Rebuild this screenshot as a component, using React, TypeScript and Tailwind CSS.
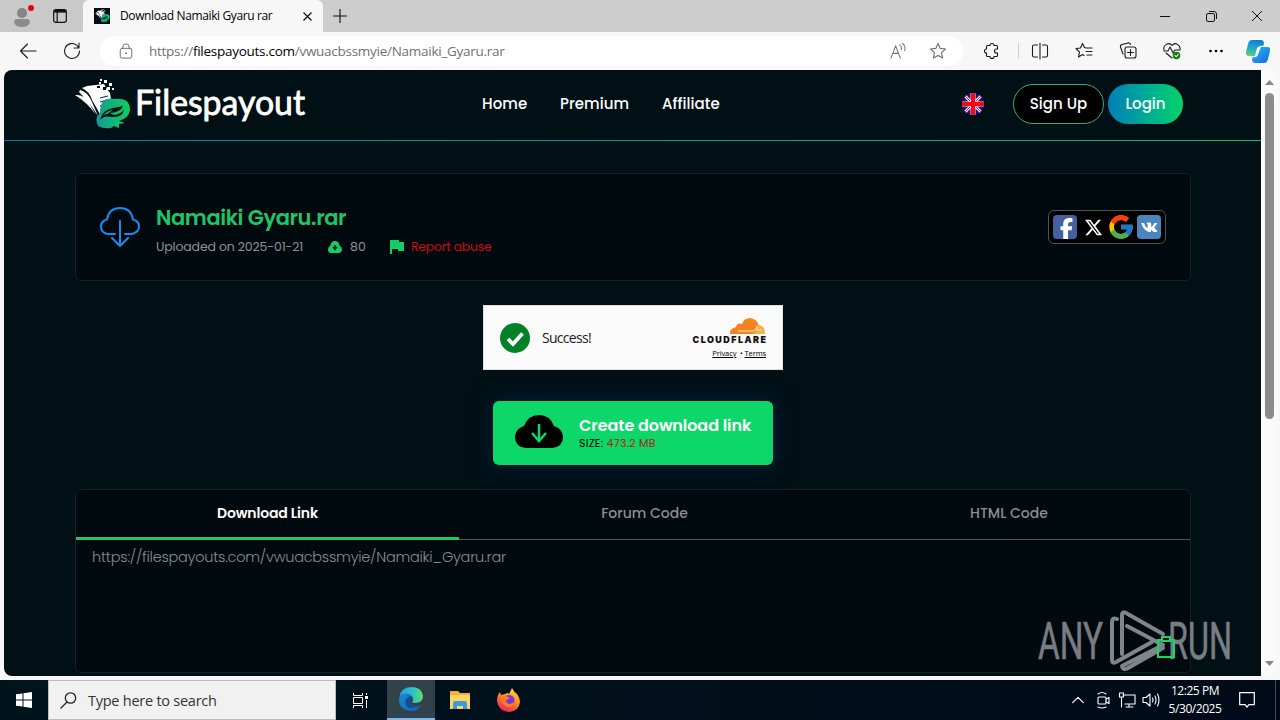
import type { ReactNode } from "react";
import { FaXTwitter, FaFacebookF } from "react-icons/fa6";
import { FcGoogle } from "react-icons/fc";

const PAGE_FONT = "font-[Poppins,Inter,sans-serif]";
const UI_FONT = "font-['Segoe_UI','Open_Sans',sans-serif]";

function Line({ size = 18, children, className = "" }: { size?: number; children: ReactNode; className?: string }) {
  return (
    <svg
      width={size}
      height={size}
      viewBox="0 0 18 18"
      fill="none"
      stroke="currentColor"
      strokeWidth="1.1"
      strokeLinecap="round"
      strokeLinejoin="round"
      className={`shrink-0 ${className}`}
    >
      {children}
    </svg>
  );
}

function FilespayoutMark({ size = 56 }: { size?: number }) {
  return (
    <svg width={size} height={size * 0.91} viewBox="0 0 56 51" className="shrink-0">
      <defs>
        <linearGradient id="snake" x1="0" x2="1">
          <stop offset="0" stopColor="#149a93" />
          <stop offset="1" stopColor="#10cf60" />
        </linearGradient>
      </defs>
      {/* fanned pages */}
      <path d="M12 7Q21 6 29 5L32 10L35 14L36 20Q26 22 25 35L17 21Q15 13 7 9Z" fill="#fff" />
      <path d="M5 11Q13 13 17 23L23 37Q15 24 4 13ZM0 16Q9 15 14 24L21 36Q13 24 0 16Z" fill="#fff" />
      <path d="M24 3h2v2h-2zM29 1h3v3h-3zM34 4h3v3h-3zM32 8h3v3h-3zM37 9h2v2h-2zM25 0h2v2h-2z" fill="#fff" />
      <path d="M28 8h3v3h-3zM22 7h3v2h-3z" fill="#000f14" />
      <path d="M25 19l8-2M25 23l7-2M25 27l5-1" stroke="#17303a" strokeWidth="1.200" />
      {/* coiled snake */}
      <path
        d="M26 26Q29 18 39 20Q55 18 55 31Q54 39 44 42L50 44L44 45V49L39 47L36 49Q28 50 23 47Q19 39 25 34Q25 30 26 26Z"
        fill="url(#snake)"
      />
      <path d="M25 41Q27 31 38 29L48 27Q46 33 35 34L39 36Q47 35 49 30Q48 39 37 38Q29 36 25 41Z" fill="#00190f" />
      <path d="M27 38Q31 32 38 31L32 35Q29 35 27 38Z" fill="url(#snake)" />
    </svg>
  );
}

function TitleBar() {
  return (
    <div className="flex h-8 bg-[#cdcdcd] text-[#111]">
      <div className="flex w-[83px] items-center rounded-br-md bg-[#c9c9c9]">
        <div className="relative ml-[13px] h-[18px] w-[18px]">
          <svg width="18" height="20" viewBox="0 0 18 20">
            <circle cx="9" cy="6" r="5" fill="#858585" />
            <path d="M1 15.500Q1 12 4 12h10q3 0 3 3.500Q15 20 9 20T1 15.500Z" fill="#8b8b8b" />
          </svg>
          <span className="absolute -top-0.5 left-[15px] h-1.5 w-1.5 rounded-full bg-[#ea0010]" />
        </div>
        <svg width="14" height="14" viewBox="0 0 14 14" fill="none" stroke="#111" strokeWidth="1.2" className="ml-[22px]">
          <rect x=".7" y=".7" width="12.600" height="12.600" rx="2" />
          <path d="M1 2.300h12" strokeWidth="2.600" />
          <path d="M4.200 3v10" />
        </svg>
      </div>
      <div className="flex w-[240px] items-center rounded-t-md bg-[#f7f7f7]">
        <div className="ml-[11px] flex h-4 w-4 items-center justify-center bg-[#000f14]">
          <FilespayoutMark size={15} />
        </div>
        <span className={`${UI_FONT} ml-[10px] w-[153px] whitespace-nowrap text-[12px] tracking-[-0.38px] text-black`}>Download Namaiki Gyaru rar</span>
        <svg width="9" height="9" viewBox="0 0 9 9" stroke="#111" strokeWidth="1.2" className="ml-[30px]">
          <path d="m.5.5 8 8m0-8-8 8" />
        </svg>
      </div>
      <svg width="14" height="14" viewBox="0 0 14 14" stroke="#111" strokeWidth="1.1" className="ml-2.5 mt-[9px]">
        <path d="M7 0v14M0 7h14" />
      </svg>
      <div className="ml-auto flex items-center">
        <div className="flex w-[46px] justify-center">
          <svg width="10" height="10" viewBox="0 0 10 10" stroke="#111"><path d="M0 5.500h10" /></svg>
        </div>
        <div className="flex w-[46px] justify-center">
          <svg width="11" height="11" viewBox="0 0 11 11" fill="none" stroke="#111">
            <rect x=".5" y="2.500" width="8" height="8" rx="1.500" />
            <path d="M3 .5h5q2.500 0 2.500 2.500v5" />
          </svg>
        </div>
        <div className="flex w-[46px] justify-center">
          <svg width="10" height="10" viewBox="0 0 10 10" stroke="#111"><path d="m0 0 10 10m0-10L0 10" /></svg>
        </div>
      </div>
    </div>
  );
}

const STAR = "m9 1.500 2.200 4.900 5.300.6-4 3.600 1.100 5.400L9 13.400 4.400 16l1.100-5.400-4-3.600 5.300-.6Z";

function Toolbar() {
  const cell = "flex w-11 shrink-0 justify-center";
  return (
    <div className="flex h-[38px] items-center bg-[#f7f7f7] text-[#1b1b1b]">
      <Line className="ml-[19px]"><path d="M17 9H1.500m7-7L1.500 9l7 7" /></Line>
      <Line className="ml-[26px]"><path d="M16.500 9A7.500 7.500 0 1 1 14 3.400L16 6M16 1v5h-5" /></Line>
      <div className="ml-[19px] flex h-[30px] w-[863px] items-center rounded-full bg-white text-[#707070]">
        <Line size={16} className="ml-[18px]">
          <rect x="2.500" y="6" width="13" height="11" rx="2" />
          <path d="M5.500 6V4.500a3.500 3.500 0 0 1 7 0V6" />
          <circle cx="9" cy="11.500" r=".5" fill="currentColor" />
        </Line>
        <span className={`${UI_FONT} ml-[15px] whitespace-nowrap text-[13.5px] tracking-[-0.27px]`}>
          https://<span className="text-black">filespayouts.com</span>/vwuacbssmyie/Namaiki_Gyaru.rar
        </span>
        <Line size={17} className="ml-auto">
          <path d="m1 16 5-13 5 13M3 11h6M10 2q3 2 2 5M13 0q4 3 2.500 8" />
        </Line>
        <Line className="ml-[22px] mr-[16px]"><path d={STAR} /></Line>
      </div>
      <div className={`${cell} ml-1.5`}>
        <Line>
          <path d="M5.500 3.500H8a2 2 0 0 1 4 0h2.500q1 0 1 1V7h-1a2 2 0 0 0 0 4h1v2.500q0 1-1 1H12a2 2 0 0 1-4 0H5.500q-1 0-1-1V11a2 2 0 0 1 0-4V4.500q0-1 1-1Z" />
        </Line>
      </div>
      <div className="ml-[5px] h-4 w-px shrink-0 bg-[#ccc]" />
      <div className={`${cell} -ml-px`}>
        <Line><path d="M6.500 3H3Q1.500 3 1.500 4.500v9Q1.500 15 3 15h3.500M11.500 3H15q1.500 0 1.500 1.500v9Q16.500 15 15 15h-3.500M9 1v16" /></Line>
      </div>
      <div className={cell}>
        <Line><path d="M11 6 9.500 5.500 7.500 1.500 5.500 6 1 6.500l3.500 3.700L3.500 15l4-2.500 1.500 1M11.500 6H17M11 9.500h6M12 13h5" /></Line>
      </div>
      <div className={cell}>
        <Line><rect x="6" y="5" width="11" height="11" rx="2" /><path d="M11.500 7.500v6m-3-3h6M4 12 1.500 5Q1 3 3 2.500L9 1q2-.5 2.500 1.500" /></Line>
      </div>
      <div className={cell}>
        <Line>
          <path d="M1 8C-.5 3 6-.5 9 3.500 12-.5 18 3 17 8M1 9h4l2-4 3 6 2-3h5M3 11l6 5" />
          <circle cx="13.500" cy="13.500" r="3.800" fill="#137b17" stroke="none" />
          <path d="m12 13.700 1.200 1 2-2.200" stroke="#fff" />
        </Line>
      </div>
      <div className={cell}>
        <svg width="14" height="4" viewBox="0 0 14 4"><circle cx="1.500" cy="2" r="1.300" /><circle cx="7" cy="2" r="1.300" /><circle cx="12.500" cy="2" r="1.300" /></svg>
      </div>
      <svg width="24" height="23" viewBox="0 0 24 23" className="ml-2 shrink-0">
        <defs>
          <linearGradient id="copA" x1=".5" x2=".3" y2="1"><stop stopColor="#167bd3" /><stop offset=".5" stopColor="#1ba9cf" /><stop offset="1" stopColor="#63cf6c" /></linearGradient>
          <linearGradient id="copB" y2="1"><stop stopColor="#24bdf5" /><stop offset="1" stopColor="#1765e2" /></linearGradient>
        </defs>
        <path d="M6 0h9q3 0 3 4l-1 2q-4-1-5 3l-2 7H3q-4 0-3-4L2 4q1-4 4-4Z" fill="url(#copA)" />
        <path d="M18 23H9q-3 0-3-4l1-2q4 1 5-3l2-7h7q4 0 3 4l-2 8q-1 4-4 4Z" fill="url(#copB)" />
        <path d="m11 8-2 8q2 1 3-2l3-7q-3-1-4 1Z" fill="#fff" />
      </svg>
    </div>
  );
}

function UkFlag() {
  return (
    <svg width="22" height="22" viewBox="0 0 22 22">
      <defs><clipPath id="uk"><circle cx="11" cy="11" r="11" /></clipPath></defs>
      <g clipPath="url(#uk)">
        <path d="M0 0h22v22H0z" fill="#16128a" />
        <path d="m0 0 22 22m0-22L0 22" stroke="#f2e4ee" strokeWidth="3" />
        <path d="m0 0 22 22m0-22L0 22" stroke="#e3143c" strokeWidth="1" />
        <path d="M11 0v22M0 11h22" stroke="#f2e4ee" strokeWidth="5" />
        <path d="M11 0v22M0 11h22" stroke="#fb0510" strokeWidth="4" />
      </g>
    </svg>
  );
}

function SiteHeader() {
  return (
    <>
      <header className="flex h-[70px] items-center pb-0.5 pl-[71px] pr-[78px] text-white">
        <FilespayoutMark />
        <svg width="174" height="48" viewBox="0 0 174 48" className="ml-1">
          <text x="0" y="35" fill="#fff" stroke="#fff" strokeWidth=".8" fontFamily="Lato, sans-serif" fontSize="34" fontWeight="400" textLength="170" lengthAdjust="spacingAndGlyphs">Filespayout</text>
        </svg>
        <nav className="ml-[173px] flex text-[15px] font-medium tracking-[0.05px]">
          <a className="w-[78px]">Home</a>
          <a className="w-[102px]">Premium</a>
          <a>Affiliate</a>
        </nav>
        <div className="ml-auto flex items-center text-[15px] font-medium">
          <UkFlag />
          <button className="ml-[29px] h-10 w-[91px] rounded-full border border-[#35ad72] bg-black">Sign Up</button>
          <button className="ml-1 h-10 w-[75px] rounded-full bg-linear-to-r from-[#057db5] to-[#0bd364]">Login</button>
        </div>
      </header>
      <div className="h-px bg-linear-to-r from-[#08779b] to-[#1eb36c]" />
    </>
  );
}

function FileCard() {
  return (
    <section className="mt-8 flex h-[108px] items-center rounded-md border border-[#142127] bg-[#00090d] px-6">
      <svg width="40" height="40" viewBox="0 0 40 40" fill="none" stroke="#168df0" strokeWidth="2" strokeLinecap="round" strokeLinejoin="round">
        <path d="M15 27H8Q1 26 1 19.500 1 14 7 12.500 9 1 20 1t13 11.500q6 1.500 6 7T32 27h-7M20 14v25m-8-8 8 8 8-8" />
      </svg>
      <div className="ml-4 mt-1.5">
        <h1 className="whitespace-nowrap text-[21px] font-semibold leading-[30px] tracking-[-0.4px] text-[#20c46b]">Namaiki Gyaru.rar</h1>
        <div className="mt-1 flex h-5 items-center whitespace-nowrap text-[12.5px] text-[#8b949d]">
          <span className="w-[148px] tracking-[-0.16px]">Uploaded on 2025-01-21</span>
          <svg width="14" height="12" viewBox="0 0 14 12" className="ml-6">
            <path d="M3 12Q0 12 0 8.500 0 6 2.500 4.500 3 0 7 0t4.500 4.500Q14 6 14 8.500T11 12Z" fill="#13ce66" />
            <path d="M7 4v4M5 6l2 2.500L9 6" stroke="#00251a" fill="none" strokeWidth="1.500" />
          </svg>
          <span className="ml-2 w-4">80</span>
          <svg width="14" height="14" viewBox="0 0 14 14" className="ml-6"><path d="M0 0h9v2h5v9H8V9H2v5H0Z" fill="#13ce66" /></svg>
          <a className="ml-[7px] tracking-[-0.25px] text-[#d00716]">Report abuse</a>
        </div>
      </div>
      <div className="ml-auto flex h-[34px] w-[118px] items-center justify-center gap-1 rounded-md border border-[#4b5654] bg-black">
        <span className="flex h-6 w-6 items-end justify-end overflow-hidden rounded-sm bg-[#4460a0]"><FaFacebookF size={21} color="#fff" /></span>
        <span className="flex h-6 w-6 items-center justify-center"><FaXTwitter size={19} color="#fff" /></span>
        <FcGoogle size={28} className="-mx-0.5 shrink-0" />
        <svg width="24" height="24" viewBox="0 0 24 24" className="shrink-0">
          <rect width="24" height="24" rx="4" fill="#4986bd" />
          <path
            d="M4 8h3q1 4 3 5 .8 0 .8-2 0-2.300-1.300-2.500.3-1 2-1h1.500q1.200 0 1.200 1.300v3q1.500.2 3-3.800h3q.2.800-3 4.500 0 .4 2.800 3.200.8 1.300-.5 1.300h-2.500q-.8 0-2.500-2-.8 0-.8 2h-1.700Q7 16 4 8Z"
            fill="#fff"
          />
        </svg>
      </div>
    </section>
  );
}

function Turnstile() {
  return (
    <div className={`${UI_FONT} mx-auto mt-6 flex h-[65px] w-[300px] items-center border border-[#e0e0e0] bg-[#fafafa] px-4 text-[#232323]`}>
      <svg width="30" height="30" viewBox="0 0 30 30">
        <circle cx="15" cy="15" r="15" fill="#038127" />
        <path d="m8 16 5 5L22.500 10.500" stroke="#fff" strokeWidth="3.800" fill="none" />
      </svg>
      <span className="ml-3 text-[14px] tracking-[-0.7px]">Success!</span>
      <div className="ml-auto flex flex-col items-end">
        <svg width="75" height="28" viewBox="0 0 75 28">
          <path d="M39 17q-1-5 6-7 1-5 6-3 2-6 8-6 8 1 9 9l-2 5-2 2Z" fill="#f6821f" />
          <path d="M65 8q9-1 9 9H61l4-3Z" fill="#fbad41" />
          <path d="M47 14h16l3-4v3h5" fill="none" stroke="#fff" strokeWidth=".8" />
          <text x="1.500" y="26" textLength="73.500" lengthAdjust="spacing" fontFamily="Inter, sans-serif" fontSize="9" fontWeight="900" fill="#111">CLOUDFLARE</text>
        </svg>
        <span className="mt-[3px] whitespace-nowrap text-[7.5px] leading-[11px] tracking-[-0.1px] text-black">
          <u>Privacy</u>&nbsp; • <u>Terms</u>
        </span>
      </div>
    </div>
  );
}

function DownloadButton() {
  return (
    <button className="mx-auto mt-[31px] flex h-16 w-[280px] items-center rounded-md bg-[#0dd768] pl-[22px] text-left shadow-[0_0_20px_3px_#001a35]">
      <svg width="48" height="33" viewBox="0 0 48 33" className="-mt-1">
        <path d="M11 33Q0 32 0 22q0-8 9-11Q13 0 24 0t15 11q9 3 9 11 0 10-11 11Z" fill="#000" />
        <path d="M24 9v16m-7-7 7 8 7-8" stroke="#0dd768" strokeWidth="2.500" fill="none" />
      </svg>
      <div className="ml-4 whitespace-nowrap">
        <div className="text-[16px] font-semibold leading-5 tracking-[-0.06px] text-white">Create download link</div>
        <div className="text-[11px] leading-[15px] tracking-[0.25px] text-black">SIZE: <span className="text-[#b11a1d]">473.2 MB</span></div>
      </div>
    </button>
  );
}

function LinkTabs() {
  return (
    <section className="mt-6 flex h-[184px] flex-col rounded-md border border-[#142127] bg-[#00090d]">
      <div className="flex h-[50px] shrink-0 text-center text-[14px] leading-[47px] text-[#8a8f91]">
        <div className="w-[383px] border-b-[3px] border-[#20c56c] font-semibold tracking-[-0.15px] text-white">Download Link</div>
        <div className="w-[371px] border-b border-[#4d5653] font-medium">Forum Code</div>
        <div className="flex-1 border-b border-[#4d5653] pr-0.5 font-medium">HTML Code</div>
      </div>
      <div className="px-4 pt-[6px] text-[14.5px] font-light leading-[22px] tracking-[-0.26px] text-[#868e91]">
        https://filespayouts.com/vwuacbssmyie/Namaiki_Gyaru.rar
      </div>
    </section>
  );
}

function Watermark() {
  return (
    <svg width="204" height="72" viewBox="0 0 204 72" className="absolute left-[1038px] top-[609px]">
      <g fill="#858a91" fontFamily="Roboto, sans-serif" fontSize="52" opacity=".9">
        <text x="0" y="50" stroke="#858a91" strokeWidth=".6" textLength="65" lengthAdjust="spacingAndGlyphs">ANY</text>
        <text x="130" y="50" stroke="#858a91" strokeWidth=".6" textLength="64" lengthAdjust="spacingAndGlyphs">RUN</text>
      </g>
      <g fill="none" stroke="#7f858c" strokeWidth="4" strokeLinejoin="round" strokeLinecap="round">
        <path d="M79 10q-5-2-5 3v38q0 4 4 2l36-20M84 45V6q0-4 4-2l37 21M89 17l36 19L84 57q1 5 6 2l35-20" />
      </g>
      <g fill="none" stroke="#18d865" strokeWidth="2">
        <path d="M124 31h-4v17h16V31h-4M124 28h8v4h-8Z" />
      </g>
    </svg>
  );
}

function Taskbar() {
  return (
    <div className={`${UI_FONT} flex h-10 items-center bg-linear-to-r from-[#00141c] to-[#000a19] text-white`}>
      <div className="flex w-12 justify-center">
        <svg width="16" height="16" viewBox="0 0 16 16" fill="#fff"><path d="M0 2.300 6.500 1.400v6.100H0zM7.500 1.200 16 0v7.500H7.500zM0 8.500h6.500v6.100L0 13.700zM7.500 8.500H16V16l-8.500-1.200z" /></svg>
      </div>
      <div className="flex h-10 w-[288px] items-center border border-[#b9bdbe] bg-[#f1f1f1] text-[#333]">
        <svg width="17" height="17" viewBox="0 0 17 17" fill="none" stroke="#222" strokeWidth="1.300" className="ml-[11px]"><circle cx="10.500" cy="6" r="5.200" /><path d="M7 10 .5 16.500" /></svg>
        <span className="ml-[11px] mt-0.5 whitespace-nowrap text-[14.500px] tracking-[-0.25px]">Type here to search</span>
      </div>
      <div className="flex w-12 justify-center">
        <svg width="17" height="17" viewBox="0 0 17 17" fill="none" stroke="#fff">
          <path d="M1.500 1v2.500h9V1M1.500 16v-2.500h9V16M1.500 5.500h9v6h-9zM14.500 1v2M14.500 8v8" />
          <path d="M13 4h3v3h-3z" fill="#fff" stroke="none" />
        </svg>
      </div>
      <div className="ml-[3px] flex h-10 w-12 items-center justify-center border-b-2 border-[#76b9ed] bg-[#31424b]">
        <svg width="24" height="24" viewBox="0 0 24 24">
          <defs>
            <linearGradient id="edgeA" x2="1"><stop stopColor="#249ce8" /><stop offset=".55" stopColor="#29c2c9" /><stop offset="1" stopColor="#61dc67" /></linearGradient>
            <linearGradient id="edgeB" y2="1"><stop stopColor="#1689d7" /><stop offset="1" stopColor="#1362b4" /></linearGradient>
          </defs>
          <path d="M0 11Q2 0 12 0q11 0 12 9 0 7-8 7-4 0-2-3 0-5-5-6Q3 6 0 11Z" fill="url(#edgeA)" />
          <path d="M0 12Q2 6 8 7q5 0 6 5-3-2-4 2 1 7 12 5-4 5-10 5Q0 23 0 12Z" fill="url(#edgeB)" />
          <path d="M7 12q3-3 5-3 2 1 2 3-3-2-4 2 0 5 7 6-8 3-10-2-1-3 0-6Z" fill="#114d96" />
        </svg>
      </div>
      <div className="ml-px flex w-12 justify-center">
        <svg width="22" height="20" viewBox="0 0 22 20">
          <path d="M1 1h8l2 2h10v16H1Z" fill="#efb32d" /><path d="M1 5h20v14H1Z" fill="#fbd568" />
          <path d="M4 19v-6q0-2 2-2h10q2 0 2 2v6h-4v-3H8v3Z" fill="#3b9bd9" />
        </svg>
      </div>
      <div className="flex w-12 justify-center">
        <svg width="23" height="24" viewBox="0 0 23 24">
          <defs><linearGradient id="fox" x1=".8" x2=".3" y2="1"><stop stopColor="#ffe438" /><stop offset=".5" stopColor="#ff8424" /><stop offset="1" stopColor="#ec1d62" /></linearGradient></defs>
          <path d="M3 4 4 7l4-1Q11 4 12 6L15 0q2 4 5 6 3 4 3 8-1 9-11 10Q1 23 0 13 0 7 3 4Z" fill="url(#fox)" />
          <circle cx="12" cy="12.500" r="5.500" fill="#7539d3" />
          <path d="M4 9q4-3 7 0l2 1.500-4 1.500q0 4 4 4 3 0 5-3-1 6-7 6-6-1-7-10Z" fill="#ff7b27" />
        </svg>
      </div>
      <div className="ml-auto flex items-center">
        <Line size={12}><path d="m1 13 8-8 8 8" strokeWidth="1.700" /></Line>
        <Line size={18} className="ml-[10px]"><rect x="4" y="6" width="8" height="7" rx="1" /><path d="m12 8 3-1.500v6L12 11M4 3q4-3 8 0M4 16q4 2 8 0" /></Line>
        <Line size={18} className="ml-[6px]"><path d="M5 4h12v9H7M11 13v3m-3 0h7M1.500 2h4v4h-4zM3.500 6v10" /></Line>
        <Line size={18} className="ml-[6px]"><path d="M1 6.500h3L8 3v12l-4-3.500H1ZM10.500 7q1 2 0 4M13 5q2 4 0 8M15.500 3q3 6 0 12" /></Line>
        <div className="ml-2 w-[54px] whitespace-nowrap text-center text-[12px] leading-[18px] tracking-[-0.45px]">
          <div>12:25 PM</div>
          <div>5/30/2025</div>
        </div>
        <svg width="16" height="17" viewBox="0 0 16 17" fill="none" stroke="#fff" strokeWidth="1.200" className="ml-[17px]"><path d="M.7.700h14.600v12H10L8 15l-2-2.300H.7Z" /></svg>
        <div className="ml-5 mr-1 h-10 w-px bg-[#3a4858]" />
      </div>
    </div>
  );
}

export default function App() {
  return (
    <div className="relative h-[720px] w-[1280px] overflow-hidden bg-[#f7f7f7]">
      <TitleBar />
      <Toolbar />
      <div className="ml-1 mr-[3px] flex h-[606px] overflow-hidden rounded-lg bg-white">
        <main className={`${PAGE_FONT} w-[1257px] shrink-0 bg-[#001015]`}>
          <SiteHeader />
          <div className="ml-[71px] w-[1116px]">
            <FileCard />
            <Turnstile />
            <DownloadButton />
            <LinkTabs />
          </div>
        </main>
        <div className="flex flex-1 flex-col items-center bg-[#fafafa]">
          <svg width="9" height="5" viewBox="0 0 9 5" fill="#858585" className="mt-[10px]"><path d="M4.500 0 9 5H0z" /></svg>
          <div className="mt-2 h-[326px] w-[9px] rounded-full bg-[#8b8b8b]" />
          <svg width="9" height="5" viewBox="0 0 9 5" fill="#858585" className="mb-[10px] mt-auto"><path d="M4.500 5 9 0H0z" /></svg>
        </div>
      </div>
      <div className="h-1" />
      <Taskbar />
      <Watermark />
    </div>
  );
}
